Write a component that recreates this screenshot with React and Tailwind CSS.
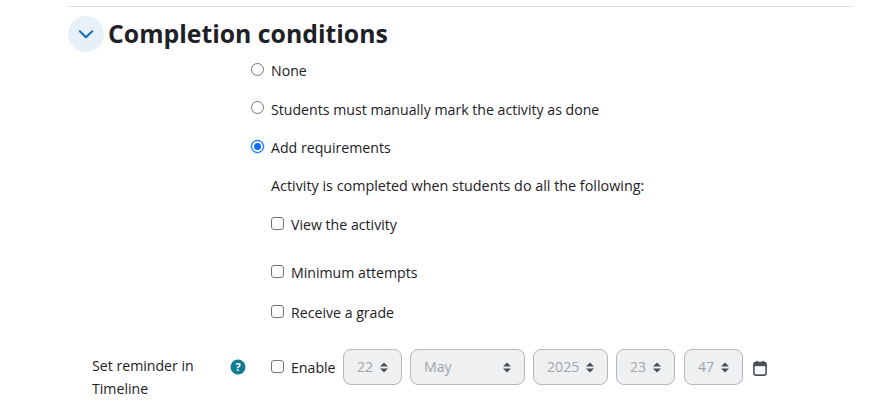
const font = { fontFamily: '"Open Sans", "Noto Sans", sans-serif' };

function Radio({ checked, label }) {
  return (
    <label className="flex items-center h-[22px] gap-[7px]">
      <input
        type="radio"
        readOnly
        checked={!!checked}
        className="appearance-none -mt-[2px] w-[13px] h-[13px] rounded-full border border-[#767676] bg-white checked:border-[#0d6efd] checked:bg-[#0d6efd] checked:shadow-[inset_0_0_0_2px_white,0_0_0_1px_#cfe2ff] shrink-0"
      />
      <span className="mt-[2px]">{label}</span>
    </label>
  );
}

function Check({ label }) {
  return (
    <label className="flex items-center h-[22px] gap-[7px]">
      <input
        type="checkbox"
        readOnly
        checked={false}
        className="appearance-none -mt-[2px] w-[13px] h-[13px] rounded-[3px] border border-[#767676] bg-white shrink-0"
      />
      <span className="mt-[2px]">{label}</span>
    </label>
  );
}

function Arrows() {
  return (
    <svg width="10" height="13" viewBox="0 0 10 13" className="shrink-0" fill="#495057">
      <path d="M5 1.5 L9 5.5 H1 Z" />
      <path d="M5 11.5 L9 7.5 H1 Z" />
    </svg>
  );
}

function Sel({ text, w }) {
  return (
    <div
      className={`flex items-center justify-between h-[36px] pl-[13px] pr-[12px] rounded-lg border border-[#b4b8bc] bg-[#eef0f2] text-[#a0a5aa] ${w}`}
    >
      <span>{text}</span>
      <Arrows />
    </div>
  );
}

export default function App() {
  return (
    <div className="w-[891px] h-[411px] overflow-hidden bg-white text-[#1d2125] text-[14.15px] leading-[22px] pl-[68px] pr-[38px]" style={font}>
      <div className="border-t border-[#dee2e6] mt-[6px] pt-[9px]">
        <div className="flex items-center gap-[4px] h-[36px]">
          <div className="w-[36px] h-[36px] rounded-full bg-[#e7f0f8] flex items-center justify-center">
            <svg width="16" height="16" viewBox="0 0 16 16" fill="none" stroke="#0f6cbf" strokeWidth="2" strokeLinecap="round" strokeLinejoin="round">
              <path d="M1.8 5.2 L8 11.2 L14.2 5.2" />
            </svg>
          </div>
          <h2 className="text-[24.8px] leading-[34px] pb-[2px] font-bold text-[#1d2125]">Completion conditions</h2>
        </div>
        <div className="ml-[183px] mt-[7px] flex flex-col">
          <Radio label="None" />
          <div className="mt-[16.5px]"><Radio label="Students must manually mark the activity as done" /></div>
          <div className="mt-[16.5px]"><Radio checked label="Add requirements" /></div>
          <div className="ml-[20px] mt-[17px] flex flex-col">
            <div className="h-[22px] text-[14.35px]">Activity is completed when students do all the following:</div>
            <div className="mt-[16px]"><Check label="View the activity" /></div>
            <div className="mt-[26px]"><Check label="Minimum attempts" /></div>
            <div className="mt-[18px]"><Check label="Receive a grade" /></div>
          </div>
        </div>
        <div className="flex mt-[26px]">
          <div className="w-[183px] flex pl-[24px] pt-[5px]">
            <div className="w-[135px] leading-[23px]">Set reminder in Timeline</div>
            <svg width="16" height="16" viewBox="0 0 16 16" className="ml-[3px] mt-[5px] shrink-0">
              <circle cx="8" cy="8" r="7.5" fill="#0f7c8f" />
              <text x="8" y="12" textAnchor="middle" fontSize="11" fontWeight="700" fill="#fff" fontFamily="Open Sans">?</text>
            </svg>
          </div>
          <div className="ml-[20px] flex items-center h-[36px]">
            <div className="w-[72px]"><Check label="Enable" /></div>
            <div className="flex gap-[8px]">
              <Sel text="22" w="w-[59px]" />
              <Sel text="May" w="w-[115px]" />
              <Sel text="2025" w="w-[75px]" />
              <Sel text="23" w="w-[59px]" />
              <Sel text="47" w="ml-[1px] w-[59px]" />
            </div>
            <svg width="14" height="16" viewBox="0 0 14 16" className="ml-[10px] mt-[1px]" fill="none">
              <rect x="0.9" y="2.5" width="12.2" height="12.6" rx="1.5" stroke="#495057" strokeWidth="1.6" />
              <rect x="1" y="3" width="12" height="3.2" fill="#495057" />
              <rect x="3" y="0.8" width="1.7" height="3" fill="#495057" />
              <rect x="9.3" y="0.8" width="1.7" height="3" fill="#495057" />
            </svg>
          </div>
        </div>
      </div>
    </div>
  );
}
